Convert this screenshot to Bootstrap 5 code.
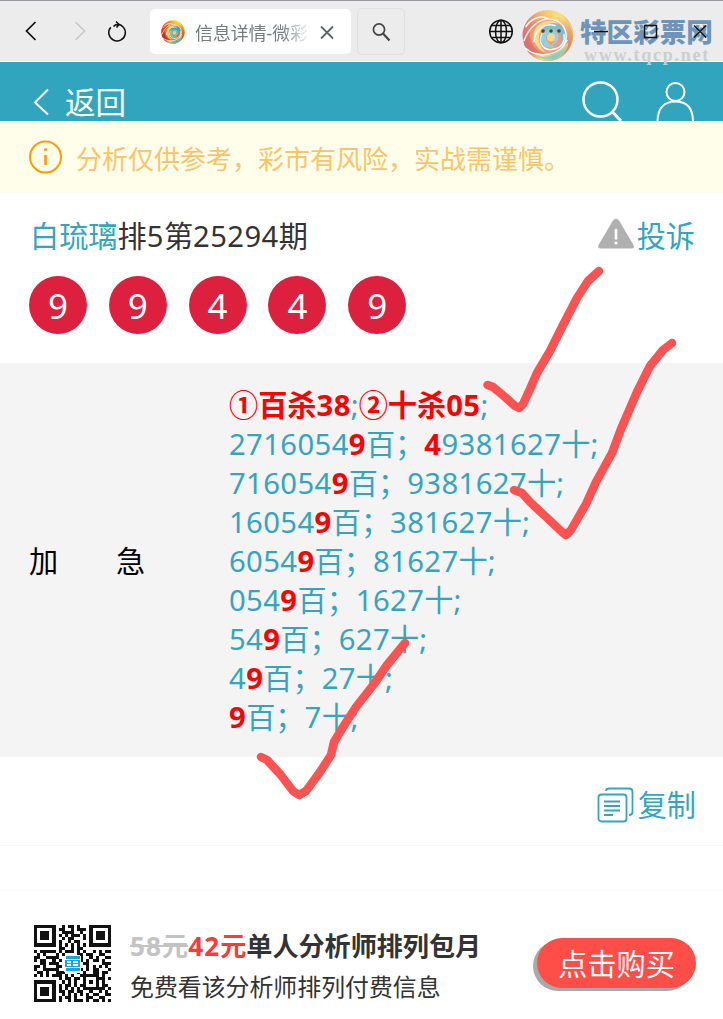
<!DOCTYPE html>
<html lang="zh-CN">
<head>
<meta charset="utf-8">
<meta name="viewport" content="width=device-width, initial-scale=1">
<title>信息详情-微彩</title>
<link href="https://cdn.jsdelivr.net/npm/bootstrap@5.3.0/dist/css/bootstrap.min.css" rel="stylesheet">
<style>
body{font-family:"Noto Sans","Noto Sans CJK SC",sans-serif;color:#333;background:#fff;overflow:hidden;line-height:1}
svg{display:block;flex:none}
.page{width:723px;height:1019px;overflow:hidden}
.chrome{height:62px;background:#ececec;border-top:1px solid #96989d;border-bottom:1px solid #fff}
.tab{width:201px;height:45px;margin:8px 0 0 22px;background:#fff;border-radius:5px;padding-left:11px}
.tab-title{width:112px;margin-left:10px;padding-top:2px;font-size:17.9px;line-height:26px;color:#777b80;white-space:nowrap;overflow:hidden;-webkit-mask-image:linear-gradient(90deg,#000 78%,rgba(0,0,0,.15));mask-image:linear-gradient(90deg,#000 78%,rgba(0,0,0,.15))}
.find{width:48px;height:47px;margin:7px 0 0 6px;border:1px solid #dfdfdf;border-radius:5px}
.globe{margin-right:208px}
.brand{left:522px;top:8px;width:201px;height:60px}
.brand-name{left:58px;top:4px;font:900 26.6px/36px "Noto Sans CJK SC",sans-serif;color:#6e95b9;white-space:nowrap}
.brand-url{left:62px;top:36px;font:bold 18px/20px "Liberation Serif",serif;letter-spacing:1.75px;color:#cbced0;white-space:nowrap}
.appbar{height:59px;background:#32a5be;color:#fff}
.back{font-size:30.5px;line-height:37px;margin-left:15px;padding-top:22px}
.notice{height:72px;background:#fffeeb;color:#f8c568;font-size:26px;padding-left:28px}
.main-text{font-size:29.2px;line-height:39px}
.teal{color:#35a5bd}
.num{letter-spacing:.42px}
.issue{height:170px;padding:24px 28px 0 30px}
.ball{width:58px;height:58px;border-radius:50%;background:#dc203e;color:#fff;font-size:35px;line-height:60px;text-align:center}
.balls{gap:21.8px;margin:20px 0 0 -1px}
.plan{height:394px;background:#f4f4f4}
.plan-label{width:229px;padding:2px 0 0 29px;color:#000}
.plan-rows{padding-top:2px}
.plan-rows b{color:#f00}
.copybar{height:89px;border-bottom:1px solid #f8f8f8;padding:0 27px 0 0}
.spacer{height:45px;border-bottom:1px solid #fbfbfb}
.offer{height:128px;padding:5px 27px 0 34px}
.offer-code{margin-top:29px}
.offer-text{margin:29px 0 0 19px}
.offer-title{font-size:26.1px;line-height:42px;font-weight:700;white-space:nowrap}
.offer-title .num{letter-spacing:1.1px}
.offer-sub{font-size:23.9px;line-height:40px;white-space:nowrap}
.buy{width:159px;height:50px;margin-top:42px;border-radius:25px;background:#ff4d48;color:#fff;font-size:29.2px;line-height:52px;box-shadow:-4px 3px 0 #a9a9a9}
.ink{left:0;top:0;pointer-events:none}
</style>
<script src="https://cdn.jsdelivr.net/npm/bootstrap@5.3.0/dist/js/bootstrap.bundle.min.js"></script>
</head>
<body>
<svg width="0" height="0" class="position-absolute">
  <defs>
    <linearGradient id="warm" x1="0" y1=".75" x2="1" y2=".2"><stop stop-color="#b51f26"/><stop offset=".3" stop-color="#ee3f22"/><stop offset=".65" stop-color="#ffb820"/><stop offset=".85" stop-color="#ffdc35"/><stop offset="1" stop-color="#ee5a2a"/></linearGradient>
    <linearGradient id="rim" x1="0" y1="0" x2="0" y2="1"><stop stop-color="#ffe04a"/><stop offset=".35" stop-color="#f08226"/><stop offset="1" stop-color="#c5221c"/></linearGradient>
    <linearGradient id="base" x1="0" y1="0" x2="1" y2="0"><stop stop-color="#c2202a"/><stop offset=".35" stop-color="#f3dc45"/><stop offset=".7" stop-color="#6cbd78"/><stop offset="1" stop-color="#efd83b"/></linearGradient>
    <symbol id="swirl" viewBox="0 0 52 52">
      <circle cx="26" cy="26" r="25.500" fill="url(#warm)"/>
      <path d="M30 5C44 7 50 17 51 27C50 38 44 45 35 48C44 38 47 20 37 12Z" fill="url(#rim)"/>
      <path d="M5 41C18 47 36 46 46 33C47 43 34 52 25 51.500C16 51 9 47 5 41Z" fill="url(#base)"/>
      <path d="M14 46C28 51 42 42 46 34C45 44 36 50 26 50C21 50 17 48 14 46Z" fill="#3bacd0" opacity=".65"/>
      <path d="M8 27C7 13 20 5 33 10C44 14 47 25 43 35C39 43 29 46 20 43C13 40 9 34 8 27Z" fill="#f06a32"/>
      <path d="M13 20C18 11 29 8 37 14C29 12 22 15 18 23C15 30 18 38 24 43C14 40 9 29 13 20Z" fill="#ffd14c"/>
      <path d="M19 26C19 15 33 10 41 19C47 27 42 37 35 39C41 33 41 23 34 20C27 17 21 21 19 26Z" fill="#23a7dc"/>
      <path d="M21 24C25 18 34 19 36 25C38 31 33 36 28 36C34 33 34 27 30 25C27 23 24 25 24 28C24 32 28 36 33 37C26 41 19 35 19 29Z" fill="#5ac2e7"/>
      <circle cx="29" cy="28" r="4" fill="#ffcf4c"/>
      <path d="M4 17C9 9 19 5 26 9M2 31C7 18 18 7 31 10C43 13 48 26 41 37M4 39C15 49 38 47 45 31M12 32C13 20 23 13 33 16M20 24C15 35 23 43 34 39C41 37 43 30 42 25" fill="none" stroke="#fff" stroke-width="1.500" stroke-linecap="round"/>
    </symbol>
  </defs>
</svg>
<div class="page position-relative">
  <header class="chrome d-flex align-items-start position-relative">
    <svg width="128" height="60" fill="none" stroke="#111" stroke-width="1.700">
      <path d="M35.500 21L26.500 30L35.500 39"/><path d="M75.500 21L84.500 30L75.500 39" stroke="#c9c9c9"/>
      <path d="M118 23.300A8.300 8.300 0 1 1 111.500 25.300" stroke-width="1.500" transform="rotate(-8 117.500 31)"/><path d="M113.500 25.500Q115 23.300 118.500 23.500M116 20.500L119 23.500L116.500 26.500" stroke-width="1.500"/>
    </svg>
    <div class="tab d-flex align-items-center">
      <svg width="24" height="24"><use href="#swirl"/></svg>
      <div class="tab-title">信息详情-微彩</div>
      <svg class="ms-auto" width="44" height="40" fill="none" stroke="#606367" stroke-width="1.800"><path d="M14 14.500L26 26.500M26 14.500L14 26.500"/></svg>
    </div>
    <div class="find"><svg width="46" height="45" fill="none" stroke="#444"><circle cx="21" cy="20.500" r="5.600" stroke-width="1.700"/><path d="M25 24.500L31.500 31.500" stroke-width="2.200"/></svg></div>
    <svg width="27" height="60" class="globe ms-auto" fill="none" stroke="#111" stroke-width="1.500"><circle cx="13" cy="30.500" r="11.300"/><ellipse cx="13" cy="30.500" rx="5.500" ry="11.300"/><path d="M13 19V42M2 30.500H24M3.500 24.500H22.500M3.500 36.500H22.500"/></svg>
    <div class="brand position-absolute">
      <svg width="52" height="53" opacity=".62"><use href="#swirl"/></svg>
      <div class="brand-name position-absolute">特区彩票网</div>
      <div class="brand-url position-absolute">www.tqcp.net</div>
      <svg width="201" height="60" class="position-absolute top-0 start-0"><g fill="#44500d"><circle cx="21" cy="22" r="1.800"/><circle cx="29" cy="22" r="1.800"/><circle cx="37" cy="22" r="1.800"/></g><path d="M72 22.500H86M122.500 16.500H134.500V28.500H122.500ZM172 16.500L184 28.500M184 16.500L172 28.500" fill="none" stroke="#111" stroke-width="1.400"/></svg>
    </div>
  </header>
  <nav class="appbar d-flex">
    <svg width="50" height="59" fill="none" stroke="#fff" stroke-width="2"><path d="M48 27.500L35 40.500L48 52.500"/></svg>
    <div class="back">返回</div>
    <svg class="ms-auto" width="143" height="59" fill="none" stroke="#fff"><circle cx="20.500" cy="37.500" r="17" stroke-width="2.500"/><path d="M32.500 50L41 59" stroke-width="3"/><g stroke-width="2"><circle cx="95.500" cy="30" r="9"/><path d="M77.500 60C77.500 46 84.500 39.500 95.500 39.500S113 46 113 60"/></g></svg>
  </nav>
  <div class="notice d-flex align-items-center">
    <svg width="35" height="35" fill="none" stroke="#ff9c00"><circle cx="17.500" cy="17" r="15.500" stroke-width="2"/><path d="M17.500 15V25" stroke-width="2.600"/><circle cx="17.500" cy="9.500" r="1.600" fill="#ff9c00" stroke="none"/></svg>
    <span style="margin:4px 0 0 13px">分析仅供参考，彩市有风险，实战需谨慎。</span>
  </div>
  <section class="issue main-text">
    <div class="d-flex justify-content-between">
      <div class="text-nowrap"><span class="teal">白琉璃</span>排<span class="num">5</span>第<span class="num">25294</span>期</div>
      <div class="teal d-flex"><svg width="40" height="39"><path d="M16 3.500L1.500 28Q0 31.500 4 31.500H34Q38 31.500 36.500 28L22 3.500Q19 0 16 3.500Z" fill="#b0b0b0"/><path d="M19 13V21.500" stroke="#fff" stroke-width="2.700" stroke-linecap="round"/><circle cx="19" cy="26" r="1.600" fill="#fff"/></svg>投诉</div>
    </div>
    <div class="balls d-flex"><div class="ball">9</div><div class="ball">9</div><div class="ball">4</div><div class="ball">4</div><div class="ball">9</div></div>
  </section>
  <section class="plan main-text d-flex align-items-center">
    <div class="plan-label d-flex"><span style="width:87px">加</span><span>急</span></div>
    <div class="plan-rows teal text-nowrap">
      <div><b>①百杀<span class="num">38</span></b>;<b>②十杀<span class="num">05</span></b>;</div>
      <div><span class="num">2716054<b>9</b></span>百；<span class="num"><b>4</b>9381627</span>十;</div>
      <div><span class="num">716054<b>9</b></span>百；<span class="num">9381627</span>十;</div>
      <div><span class="num">16054<b>9</b></span>百；<span class="num">381627</span>十;</div>
      <div><span class="num">6054<b>9</b></span>百；<span class="num">81627</span>十;</div>
      <div><span class="num">054<b>9</b></span>百；<span class="num">1627</span>十;</div>
      <div><span class="num">54<b>9</b></span>百；<span class="num">627</span>十;</div>
      <div><span class="num">4<b>9</b></span>百；<span class="num">27</span>十;</div>
      <div><span class="num"><b>9</b></span>百；<span class="num">7</span>十;</div>
    </div>
  </section>
  <div class="copybar main-text teal d-flex justify-content-end align-items-center">
    <svg width="41" height="40" class="mt-2" fill="none" stroke="currentColor" stroke-width="1.800"><rect x="1.500" y="9.500" width="28" height="27" rx="3"/><path d="M9 6Q9 3.500 12 3.500H32Q35.500 3.500 35.500 7V27Q35.500 30 32 30"/><path d="M7 16.500H23M7 21H23M7 25.500H23M7 30H16" stroke-width="2"/></svg>
    <div class="text-nowrap pt-2">复制</div>
  </div>
  <div class="spacer"></div>
  <section class="offer d-flex">
    <svg id="qr" class="offer-code" width="77" height="77" viewBox="0 0 25 25" shape-rendering="crispEdges"></svg>
    <div class="offer-text">
      <div class="offer-title"><s style="color:#c3c3c3"><span class="num">58</span>元</s><span style="color:#ff3939"><span class="num">42</span>元</span>单人分析师排列包月</div>
      <div class="offer-sub">免费看该分析师排列付费信息</div>
    </div>
    <button class="buy btn p-0 ms-auto border-0">点击购买</button>
  </section>
  <svg class="ink position-absolute" width="723" height="1019" fill="none" stroke="#fc5252" stroke-width="8.500" stroke-linecap="round" stroke-linejoin="round">
    <path d="M487.500 385L493 387L505 397L515 406L519 408L523 404L530 389L537 373L550 351L562 327L577 298L588 281L599 271"/>
    <path d="M514 490L522 493L530 502L545 516L562 532L566 535L571 530L586 504L596 482L612 453L621 429L637 392L650 366L663 350L672 343"/>
    <path d="M261 757L267 760L280 774L293 791L299 795L306 791L320 772L331 755L334 742L343 727L356 707L374 684L387 665L405 643"/>
  </svg>
</div>
<script>
// One string per row of the code, # is a dark module
const rows = [
"#######..#.##.#...#######","#.....#.##..#.###.#.....#","#.###.#..####..#..#.###.#","#.###.#.#.#.###.#.#.###.#","#.###.#..#.##...#.#.###.#","#.....#.#..#.##...#.....#","#######.#.#.#.#.#.#######","........##..#.##.........","#.#####.#.###.#.#..#.#.##",".#.#...#.#....##.##..##..","##..####......##..#.#..##","#.##..#.#......#.#.##.#..","..##.###......#.##....###","##.#...##.....#..#.#.#.#.","#..#####......##.#.##...#",".##.#..###....#.#..##.##.","#.#.#.###.#.#..######.#..","........#.##.##.#...###.#","#######..#.#.#..#.#.#.#..","#.....#.#.##.#.##...#.##.","#.###.#.#.#.#.#.#######.#","#.###.#.##.##.##..#..#.#.","#.###.#..#.#.#.#.#.##..##","#.....#.#.##.#...##..##..","#######.#..#.###.#.##.#.#"];
let d = "";
rows.forEach((r, y) => [...r].forEach((c, x) => { if (c === "#") d += `M${x} ${y}h1v1h-1z`; }));
document.getElementById("qr").innerHTML = `<path d="${d}" fill="#111"/><rect x="9.600" y="9.700" width="5.800" height="5.800" rx="1" fill="#fff"/><path d="M10.500 10.200h4.300v.8h-4.300zM10.500 14h4.300v.8h-4.300zM10 11.400h5v2.200h-5z" fill="#19a4e6"/><path d="M10.700 12h1.200M12.800 12h1.400M10.700 13h1.200M12.800 13h1.400" stroke="#fff" stroke-width=".4"/>`;
</script>
</body>
</html>
